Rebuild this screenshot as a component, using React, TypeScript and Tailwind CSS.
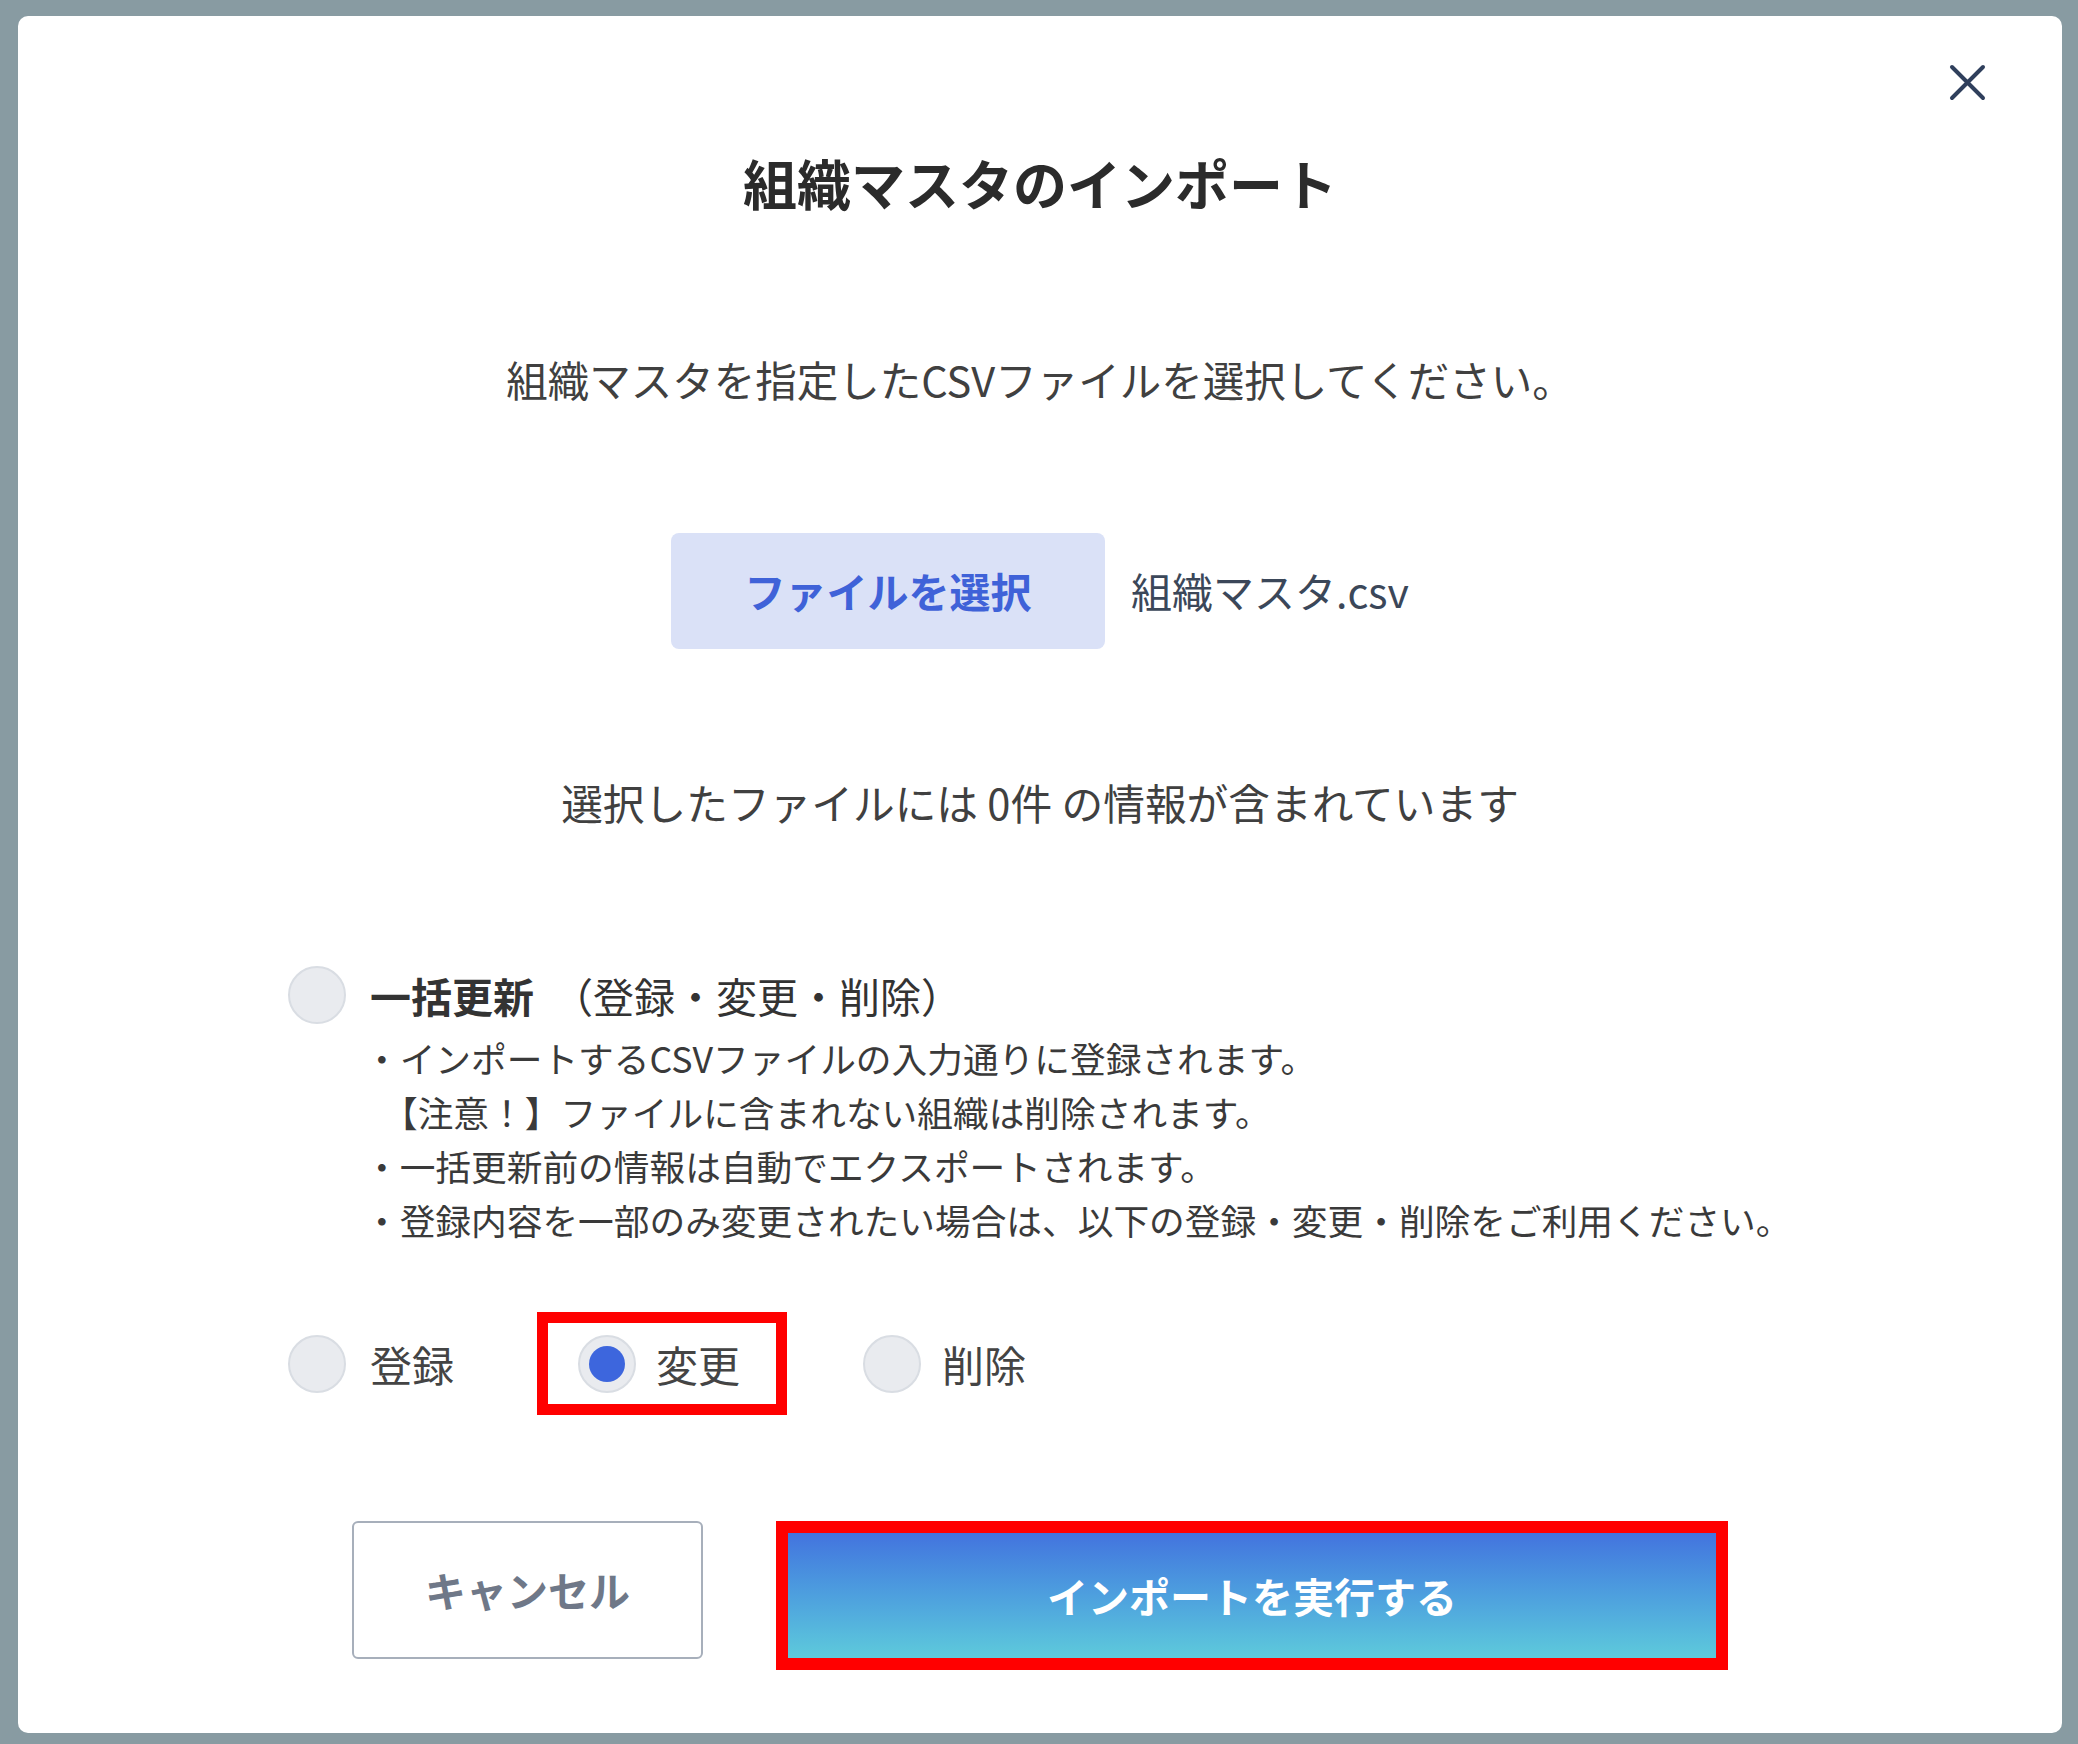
import { memo } from "react";

const FONT = { fontFamily: '"Noto Sans CJK JP", "Noto Sans", sans-serif' };

function Radio({ checked = false }: { checked?: boolean }) {
  return (
    <span className="flex h-[58px] w-[58px] shrink-0 items-center justify-center rounded-full border-2 border-[#d9dde3] bg-[#e9ebef]">
      {checked && <span className="h-[36px] w-[36px] rounded-full bg-[#3d66dd]" />}
    </span>
  );
}

function CloseIcon() {
  return (
    <svg width="37" height="37" viewBox="0 0 37 37" fill="none">
      <path d="M3 3L34 34M34 3L3 34" stroke="#2f3f5c" strokeWidth="4" strokeLinecap="round" />
    </svg>
  );
}

const notes = [
  "・インポートするCSVファイルの入力通りに登録されます。",
  "【注意！】ファイルに含まれない組織は削除されます。",
  "・一括更新前の情報は自動でエクスポートされます。",
  "・登録内容を一部のみ変更されたい場合は、以下の登録・変更・削除をご利用ください。",
];

function AppInner() {
  return (
    <div
      className="flex h-[1744px] w-[2078px] bg-[#889ba2] pt-[16px] pr-[16px] pb-[11px] pl-[18px]"
      style={FONT}
    >
      <div className="relative flex flex-1 flex-col items-center rounded-[10px] bg-white">
        {/* Close */}
        <button className="absolute top-[48px] right-[76px]">
          <CloseIcon />
        </button>

        {/* Title */}
        <h2 className="mt-[135px] text-[54px] leading-[64px] font-bold text-[#2b2b2b]">
          組織マスタのインポート
        </h2>

        <p className="mt-[136px] text-[41.5px] leading-[56px] text-[#404040]">
          組織マスタを指定したCSVファイルを選択してください。
        </p>

        {/* File picker */}
        <div className="mt-[126px] flex items-center gap-[26px]">
          <button className="flex h-[116px] w-[434px] items-center justify-center rounded-[8px] bg-[#dae1f7] text-[41px] font-bold text-[#3f62d8]">
            ファイルを選択
          </button>
          <span className="text-[41px] text-[#3b4759]">組織マスタ.csv</span>
        </div>

        <p className="mt-[125px] text-[41.7px] leading-[56px] text-[#404040]">
          選択したファイルには 0件 の情報が含まれています
        </p>

        {/* Import mode */}
        <div className="mt-[136px] flex w-[1504px] flex-col">
          <div className="flex items-center gap-[24px]">
            <Radio />
            <span className="text-[41px] leading-[58px] text-[#333]">
              <span className="font-bold">一括更新</span>
              <span className="ml-[18px]">（登録・変更・削除）</span>
            </span>
          </div>
          <div className="mt-[7px] pl-[76px]">
            {notes.map((n, i) => (
              <p
                key={i}
                className={`whitespace-nowrap text-[35.7px] leading-[54px] text-[#3a3a3a] ${i === 1 ? "pl-[18px]" : ""}`}
              >
                {n}
              </p>
            ))}
          </div>

          <div className="mt-[65px] flex items-center">
            <div className="flex items-center gap-[24px]">
              <Radio />
              <span className="text-[42px] text-[#444]">登録</span>
            </div>
            <div className="ml-[83px] flex h-[103px] items-center gap-[20px] border-[11px] border-[#ff0000] pr-[36px] pl-[30px]">
              <Radio checked />
              <span className="text-[42px] text-[#444]">変更</span>
            </div>
            <div className="ml-[76px] flex items-center gap-[21px]">
              <Radio />
              <span className="text-[42px] text-[#444]">削除</span>
            </div>
          </div>
        </div>

        {/* Actions */}
        <div className="mt-[106px] flex items-start gap-[73px]">
          <button className="flex h-[138px] w-[351px] items-center justify-center rounded-[6px] border-2 border-[#a7afbb] bg-white text-[41px] font-bold text-[#6f7888]">
            キャンセル
          </button>
          <div className="h-[149px] w-[952px] border-[12px] border-[#ff0000]">
            <button className="flex h-full w-full items-center justify-center bg-gradient-to-b from-[#4373de] to-[#5ecadb] text-[41px] font-bold text-white">
              インポートを実行する
            </button>
          </div>
        </div>
      </div>
    </div>
  );
}

const App = memo(AppInner);
export default App;
